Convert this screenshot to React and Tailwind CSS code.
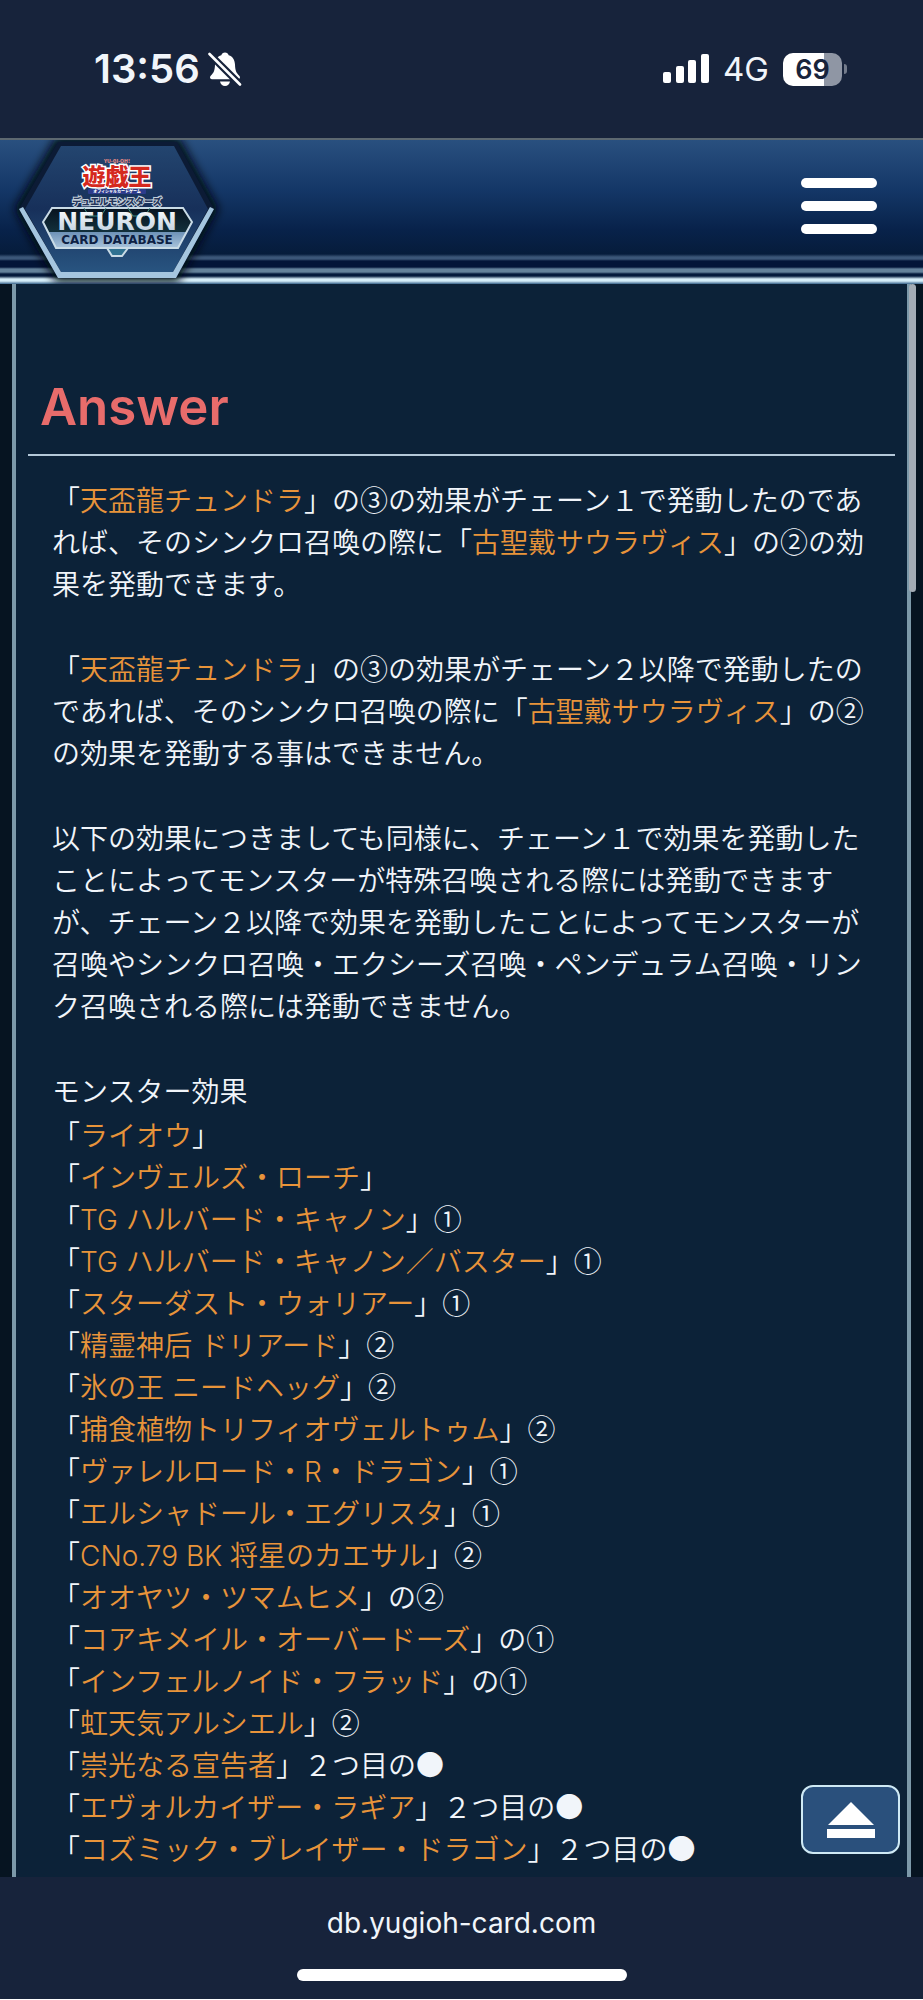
import React from 'react';

const LOGO_FONT = '"Noto Sans CJK JP", sans-serif';
const WIDE_FONT = '"DejaVu Sans", sans-serif';

const RULINGS = [
  { name: 'ライオウ', after: '」' },
  { name: 'インヴェルズ・ローチ', after: '」' },
  { name: 'TG ハルバード・キャノン', after: '」①' },
  { name: 'TG ハルバード・キャノン／バスター', after: '」①' },
  { name: 'スターダスト・ウォリアー', after: '」①' },
  { name: '精霊神后 ドリアード', after: '」②' },
  { name: '氷の王 ニードヘッグ', after: '」②' },
  { name: '捕食植物トリフィオヴェルトゥム', after: '」②' },
  { name: 'ヴァレルロード・R・ドラゴン', after: '」①' },
  { name: 'エルシャドール・エグリスタ', after: '」①' },
  { name: 'CNo.79 BK 将星のカエサル', after: '」②' },
  { name: 'オオヤツ・ツマムヒメ', after: '」の②' },
  { name: 'コアキメイル・オーバードーズ', after: '」の①' },
  { name: 'インフェルノイド・フラッド', after: '」の①' },
  { name: '虹天気アルシエル', after: '」②' },
  { name: '崇光なる宣告者', after: '」２つ目の●' },
  { name: 'エヴォルカイザー・ラギア', after: '」２つ目の●' },
  { name: 'コズミック・ブレイザー・ドラゴン', after: '」２つ目の●' },
];

// Inter first for the Latin letters, kana and kanji fall through to Noto
const CardLink = ({ children }) => (
  <a href="#card" className="font-['Inter','Noto_Sans_CJK_JP',sans-serif] leading-none text-[#e8943a]">{children}</a>
);

const StatusBar = () => (
  <div className="flex h-[138px] items-center justify-between bg-[#17233b] pl-[94px] pr-[76px] font-['Inter']">
    <div className="flex items-center gap-2">
      <span className="text-[40px] font-semibold leading-[42px]">13:56</span>
      <svg className="h-[36px] w-[34px]" viewBox="0 0 34 36" fill="#fff" aria-label="消音">
        <path d="M17 1.500c-1.900 0-3.300 1.200-3.700 2.700C9.100 5.500 7.200 9 7 13.500c-.2 6-1 8-4.500 11.500-.9 1-.6 3.200 1.300 3.200h26.400c1.900 0 2.200-2.200 1.300-3.200-3.500-3.500-4.300-5.500-4.500-11.500-.2-4.500-2.100-8-6.300-9.300-.4-1.500-1.800-2.700-3.700-2.700z" />
        <path d="M12 30.500h10c-.4 2.700-2.400 4.500-5 4.500s-4.600-1.800-5-4.500z" />
        <path d="M0 1.500L33 34.500" stroke="#17233b" strokeWidth="7" />
        <path d="M1.500 3L32 33.500" stroke="#fff" strokeWidth="2.600" strokeLinecap="round" />
      </svg>
    </div>
    <div className="flex items-center gap-[14px]">
      <svg className="h-[30px] w-[46px]" viewBox="0 0 46 30" fill="#fff" aria-label="電波">
        <rect x="0" y="18" width="8" height="11" rx="2" />
        <rect x="13" y="12" width="8" height="17" rx="2" />
        <rect x="25" y="6" width="8" height="23" rx="2" />
        <rect x="38" y="0" width="8" height="29" rx="2" />
      </svg>
      <span className="text-[33px] leading-[36px]">4G</span>
      <div className="flex items-center gap-[2px]">
        <div className="flex h-[33px] w-[59px] items-center justify-center rounded-[10px] bg-[linear-gradient(90deg,#fff_0_69%,#8f96a4_69%)] text-[27px] font-semibold leading-[33px] text-[#17233b]">
          69
        </div>
        <span className="h-[10px] w-[3px] rounded-r-full bg-[#737b8b]" />
      </div>
    </div>
  </div>
);

const Logo = () => (
  <svg className="h-[144px] w-[234px]" viewBox="0 0 234 144" role="img" aria-label="遊戯王 NEURON CARD DATABASE">
    <defs>
      <linearGradient id="hex" x1="0" y1="0" x2="0" y2="1">
        <stop offset="0" stopColor="#23456f" />
        <stop offset=".5" stopColor="#17305a" />
        <stop offset="1" stopColor="#285480" />
      </linearGradient>
      <linearGradient id="plate" x1="0" y1="0" x2="0" y2="1">
        <stop offset="0" stopColor="#07121f" />
        <stop offset=".6" stopColor="#12303c" />
        <stop offset=".61" stopColor="#6f93b8" />
        <stop offset="1" stopColor="#a9c4dc" />
      </linearGradient>
      <linearGradient id="steel" x1="0" y1="0" x2="0" y2="1">
        <stop offset="0" stopColor="#fff" />
        <stop offset="1" stopColor="#b9cbdc" />
      </linearGradient>
      <filter id="glow" x="-20%" y="-20%" width="140%" height="140%">
        <feGaussianBlur stdDeviation="5" />
      </filter>
    </defs>
    <path d="M58 2H177L214 69L176 138H58L19 69Z" fill="#020a18" stroke="#020a18" strokeWidth="8" filter="url(#glow)" />
    <path d="M58 2H177L214 69L176 138H58L19 69Z" fill="#0c1b35" />
    <path d="M61 6H174L208 69L173 132H61L25 69Z" fill="url(#hex)" />
    <path d="M19 69L23 67L61 132H173L210 67L214 69L176 138H58Z" fill="#a5c6df" />
    <g fontFamily={LOGO_FONT} textAnchor="middle" fontWeight="900">
      <text x="117" y="23" fontSize="5" fill="#e98c86">YU-GI-OH!</text>
      <text x="117" y="45" fontSize="23" fill="#d5281e" stroke="#fff" strokeWidth="3" paintOrder="stroke">遊戯王</text>
      <rect x="88" y="49" width="58" height="5" rx="1" fill="#2d3c8c" />
      <text x="117" y="53" fontSize="4" fill="#fff">オフィシャルカードゲーム</text>
      <text x="117" y="65" fontSize="9" fill="#26365a" stroke="#c3cfdb" strokeWidth="2" paintOrder="stroke">デュエルモンスターズ</text>
    </g>
    <path d="M107 108L112 116H122L128 108Z" fill="#2f7191" stroke="#c9dbe6" strokeWidth="2" />
    <path d="M52 68H183L192 82L178 108H56L43 82Z" fill="url(#plate)" stroke="#c9dbe6" strokeWidth="2" />
    <path d="M84 68l5 8h12l5-8M128 68l5 8h12l5-8" fill="none" stroke="#3d8a80" />
    <g fontFamily={WIDE_FONT} fontWeight="700" textAnchor="middle">
      <text x="117" y="90" fontSize="25" fill="url(#steel)">NEURON</text>
      <text x="117" y="104" fontSize="12" fill="#0d2144">CARD DATABASE</text>
    </g>
  </svg>
);

const Header = () => (
  <header className="flex h-[146px] items-start justify-between border-t-2 border-[#5d6870] bg-[linear-gradient(180deg,#29507f_0,#143767_50px,#08224a_90px,#061c3b_114px,#3b5678_117px,#3b5678_119px,#031538_121px,#031538_127px,#64829b_129px,#64829b_132px,#041a3c_134px,#041a3c_136px,#d5edf8_139px,#d5edf8_141px,#39648c_144px)] pr-[46px]">
    <a href="#top"><Logo /></a>
    <button type="button" aria-label="メニュー" className="mt-[38px] flex w-[76px] flex-col gap-[13px]">
      <span className="h-[10px] w-full rounded-full bg-white" />
      <span className="h-[10px] w-full rounded-full bg-white" />
      <span className="h-[10px] w-full rounded-full bg-white" />
    </button>
  </header>
);

const Answer = () => (
  <main className="mx-3 border-x-4 border-[#7c99a9] bg-[#0c2238] px-3 pb-2 pt-[91px]">
    <h1 className="border-b-2 border-[#b4c8d8] px-3 pb-[15px] font-['Inter'] text-[51px] font-semibold leading-[64px] text-[#e86c6b]">
      Answer
    </h1>
    <div className="flex flex-col gap-[43px] px-6 pt-[22px] text-[28px] font-[350] leading-[42px]">
      <p>
        「<CardLink>天盃龍チュンドラ</CardLink>」の③の効果がチェーン１で発動したのであれば、そのシンクロ召喚の際に「<CardLink>古聖戴サウラヴィス</CardLink>」の②の効果を発動できます。
      </p>
      <p>
        「<CardLink>天盃龍チュンドラ</CardLink>」の③の効果がチェーン２以降で発動したのであれば、そのシンクロ召喚の際に「<CardLink>古聖戴サウラヴィス</CardLink>」の②の効果を発動する事はできません。
      </p>
      <p>
        以下の効果につきましても同様に、チェーン１で効果を発動したことによってモンスターが特殊召喚される際には発動できますが、チェーン２以降で効果を発動したことによってモンスターが召喚やシンクロ召喚・エクシーズ召喚・ペンデュラム召喚・リンク召喚される際には発動できません。
      </p>
      <div className="flex flex-col gap-[2px]">
        <h2>モンスター効果</h2>
        <ul>
          {RULINGS.map((ruling) => (
            <li key={ruling.name}>
              「<CardLink>{ruling.name}</CardLink>{ruling.after}
            </li>
          ))}
        </ul>
      </div>
    </div>
  </main>
);

const BrowserBar = () => (
  <footer className="flex h-[122px] flex-col items-center justify-between bg-[#17233b] pb-[18px] pt-[28px]">
    <span className="font-['Inter'] text-[28px] leading-[36px]">db.yugioh-card.com</span>
    <span className="h-[12px] w-[330px] rounded-full bg-white" />
  </footer>
);

export default function App() {
  return (
    <div className="bg-[#061421] font-['Noto_Sans_CJK_JP',sans-serif] text-[#f1f5fa]">
      <StatusBar />
      <Header />
      <div className="relative">
        <Answer />
        {/* scroll thumb */}
        <span className="absolute right-[7px] top-0 h-[308px] w-[7px] rounded-full bg-[#a3acb5]" />
        <button type="button" aria-label="ページの先頭へ" className="absolute bottom-[23px] right-[23px] flex h-[69px] w-[99px] items-center justify-center rounded-[12px] border-2 border-[#cfeaf5] bg-[#2a507c]">
          <svg className="h-[36px] w-[48px]" viewBox="0 0 48 36" fill="#fff">
            <path d="M24 0L47 23H1Z" />
            <path d="M0 27H48V36H0Z" />
          </svg>
        </button>
      </div>
      <BrowserBar />
    </div>
  );
}
